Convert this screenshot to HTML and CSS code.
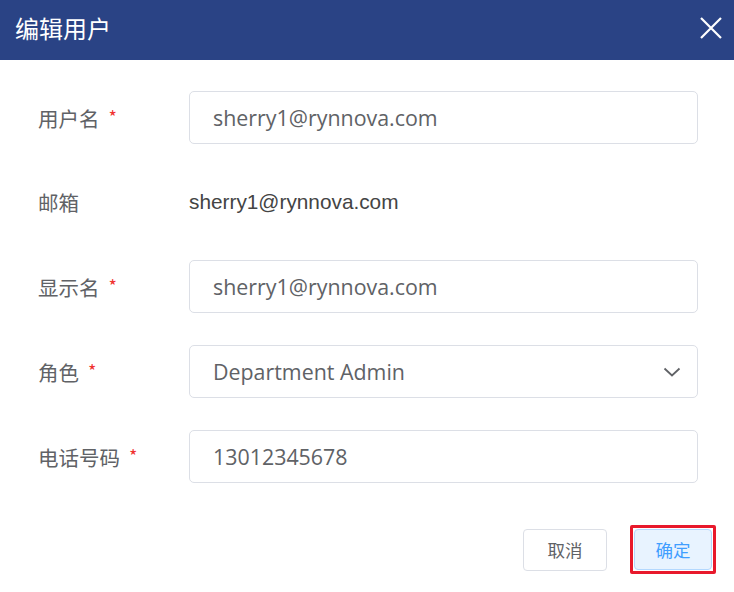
FILE: index.html
```html
<!DOCTYPE html>
<html lang="zh">
<head>
<meta charset="utf-8">
<link rel="stylesheet" href="styles.css">
</head>
<body>
<div class="dialog">
  <div class="header">
    <span class="title">编辑用户</span>
    <svg class="close" width="22" height="22" viewBox="0 0 22 22"><path d="M1 1L21 21M21 1L1 21" stroke="#fff" stroke-width="2.2" fill="none"/></svg>
  </div>
  <div class="form">
    <div class="row">
      <div class="label">用户名<span class="req">*</span></div>
      <div class="input">sherry1@rynnova.com</div>
    </div>
    <div class="row row-plain">
      <div class="label">邮箱</div>
      <div class="plain">sherry1@rynnova.com</div>
    </div>
    <div class="row">
      <div class="label">显示名<span class="req">*</span></div>
      <div class="input">sherry1@rynnova.com</div>
    </div>
    <div class="row">
      <div class="label">角色<span class="req">*</span></div>
      <div class="input select">Department Admin
        <svg class="chev" width="18" height="10" viewBox="0 0 18 10"><path d="M1.5 1.5L9 8.5L16.5 1.5" stroke="#606266" stroke-width="1.8" fill="none"/></svg>
      </div>
    </div>
    <div class="row">
      <div class="label">电话号码<span class="req">*</span></div>
      <div class="input">13012345678</div>
    </div>
  </div>
  <div class="footer">
    <div class="btn">取消</div>
    <div class="highlight"><div class="btn btn-primary">确定</div></div>
  </div>
</div>
</body>
</html>
```
FILE: styles.css
```css
html, body {
  margin: 0;
  padding: 0;
  background: #fff;
}
body {
  font-family: "Noto Sans CJK SC", "Open Sans", sans-serif;
  width: 734px;
  height: 592px;
  overflow: hidden;
}
.header {
  height: 60px;
  background: #2a4385;
  display: flex;
  align-items: center;
  justify-content: space-between;
  padding: 0 12px 0 15px;
}
.title {
  color: #fff;
  font-size: 24px;
  line-height: 1;
  margin-top: -4px;
}
.close {
  margin-top: -4px;
}
.form {
  padding: 31px 36px 0 38px;
  display: flex;
  flex-direction: column;
  gap: 32px;
}
.row {
  display: flex;
  align-items: center;
  height: 53px;
}
.row-plain {
  height: 52px;
}
.label {
  width: 151px;
  flex: none;
  font-size: 20.5px;
  color: #606266;
}
.req {
  color: #f0312f;
  font-size: 18px;
  margin-left: 9px;
  position: relative;
  top: -3px;
}
.input {
  flex: 1;
  box-sizing: border-box;
  height: 53px;
  border: 1px solid #dcdfe6;
  border-radius: 5px;
  padding: 0 23px;
  display: flex;
  align-items: center;
  font-family: "Open Sans", sans-serif;
  font-size: 21.4px;
  color: #606266;
}
.select {
  justify-content: space-between;
  padding-right: 16px;
}
.plain {
  font-family: "Liberation Sans", Arial, sans-serif;
  font-size: 20.8px;
  color: #444;
}
.footer {
  display: flex;
  justify-content: flex-end;
  align-items: center;
  padding: 42px 18px 0 0;
  gap: 23px;
}
.btn {
  box-sizing: border-box;
  width: 84px;
  height: 42px;
  border: 1px solid #dcdfe6;
  border-radius: 4px;
  display: flex;
  align-items: center;
  justify-content: center;
  font-size: 17.5px;
  color: #606266;
}
.highlight {
  border: 3px solid #e8192c;
  border-radius: 2px;
  padding: 1px;
}
.btn-primary {
  background: #e8f3ff;
  border-color: #b3d8ff;
  color: #409eff;
  width: 78px;
  height: 41px;
}
```
